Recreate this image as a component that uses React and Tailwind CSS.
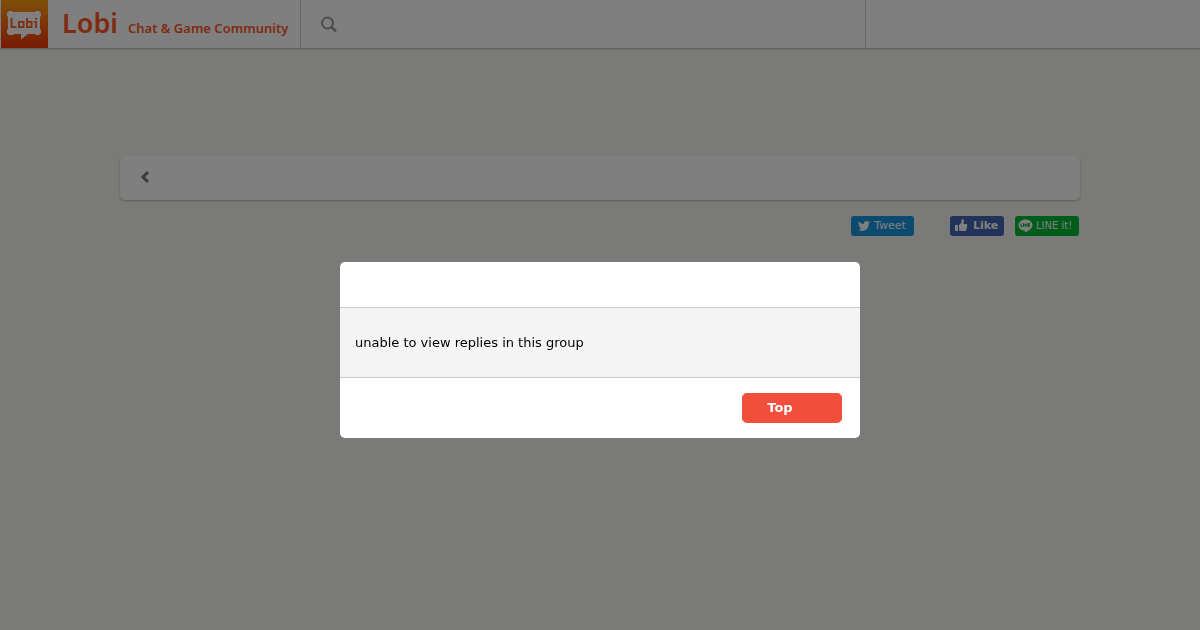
const LobiMark = () => (
  <svg viewBox="0 0 48 48" className="h-12 w-12 shrink-0" aria-hidden="true">
    <defs>
      <linearGradient id="lobi-bg" x1="0" y1="0" x2="0" y2="1">
        <stop offset="0" stopColor="#f9a00f" />
        <stop offset="0.5" stopColor="#fb6a14" />
        <stop offset="1" stopColor="#f2340c" />
      </linearGradient>
    </defs>
    <path d="M1 0h47v48H1z" fill="url(#lobi-bg)" />
    <path
      d="M9 11h3l1 1h22l1-1h3l2 2v3l-1 1v12l1 1v3l-2 2h-3l-1-1h-7l-7 5.500V34h-7l-1 1H9l-2-2v-3l1-1V17l-1-1v-3z"
      fill="#fff"
    />
    <g fill="none" stroke="#fb5a1c" strokeWidth="1.8">
      <path d="M11.500 18v9.200h5" />
      <path d="M19 21.800h4.600v5.400H19z" />
      <path d="M27 18v9.200h4.600v-5.400H27" />
      <path d="M34 21.800h2V28M36 17.800v2" />
    </g>
  </svg>
);

const SearchIcon = () => (
  <svg viewBox="0 0 18 18" className="h-[18px] w-[18px]" fill="none" stroke="#999" strokeWidth="2" aria-hidden="true">
    <circle cx="7.5" cy="8" r="5.5" />
    <path d="M11.500 12l4.500 4.500" strokeWidth="2.5" />
  </svg>
);

const BackIcon = () => (
  <svg viewBox="0 0 12 14" className="h-3.5 w-3" fill="none" stroke="#777" strokeWidth="3" aria-hidden="true">
    <path d="M9 1L4 6L9 11" />
  </svg>
);

const TwitterIcon = () => (
  <svg viewBox="0 0 24 24" className="h-3 w-3" fill="#fff" aria-hidden="true">
    <path d="M23.950 4.570a10 10 0 0 1-2.820.770 4.960 4.960 0 0 0 2.160-2.720c-.950.550-2 .960-3.130 1.180a4.920 4.920 0 0 0-8.380 4.480C7.690 8.090 4.070 6.130 1.640 3.160a4.920 4.920 0 0 0 1.520 6.570 4.900 4.900 0 0 1-2.230-.610v.060a4.920 4.920 0 0 0 3.950 4.830 5 5 0 0 1-2.210.080 4.940 4.940 0 0 0 4.600 3.420A9.870 9.870 0 0 1 0 19.540a13.990 13.990 0 0 0 7.550 2.210c9.050 0 14-7.500 14-13.980 0-.210 0-.420-.020-.630a9.940 9.940 0 0 0 2.460-2.550z" />
  </svg>
);

const ThumbIcon = () => (
  <svg viewBox="0 0 14 14" className="h-3.5 w-3.5" fill="#fff" aria-hidden="true">
    <path d="M1 6h3v6H1z" />
    <path d="M5 6l2.500-2.500V1.200C7.500.500 8 .300 8.500.300c1 0 1.500.800 1.500 1.700L9.500 5H12c1.700 0 1.700 1.700.800 2.100.800.500.600 1.500-.200 1.800.500.600.200 1.400-.500 1.600.300.800-.200 1.500-1.100 1.500H7.500L5 11.500z" />
  </svg>
);

const LineIcon = () => (
  <svg viewBox="0 0 15 14" className="h-3.5 w-[15px]" aria-hidden="true">
    <path
      d="M7.500.500C3.500.500.500 3 .500 6.200c0 2.900 2.500 5 5.800 5.400.700.100.500.700.400 2 2.800-1.300 7.800-4 7.800-7.400C14.500 3 11.500.500 7.500.500z"
      fill="#fff"
    />
    <path
      d="M3 4.500v3h1.500M5.500 4.300v3.400M7 7.700V4.800l2 2.700V4.300M12 4.600h-1.500v3H12M10.500 6H12"
      fill="none"
      stroke="#00a52d"
      strokeWidth="1"
    />
  </svg>
);

const Header = () => (
  <header className="flex h-12 bg-white shadow-[0_1px_2px_rgba(0,0,0,0.3)]">
    <a href="#top" className="flex w-[301px] shrink-0 border-r border-[#ccc] text-[#ff5526]">
      <LobiMark />
      <span className="flex items-baseline gap-2.5 pl-3.5 font-['Noto_Sans',sans-serif] whitespace-nowrap">
        <span className="text-[27px] leading-[46px] font-semibold">Lobi</span>
        <span className="text-[13px] font-semibold">Chat &amp; Game Community</span>
      </span>
    </a>
    <form className="flex w-[565px] items-center border-r border-[#ccc] pl-[19px]">
      <button type="submit" aria-label="Search">
        <SearchIcon />
      </button>
      <input type="search" aria-label="Search" className="min-w-0 flex-1 outline-none" />
    </form>
  </header>
);

const ShareButtons = () => (
  <div className="mt-4 flex justify-end pr-px text-[11px] leading-5 text-white">
    <a href="#tweet" className="mr-9 flex h-5 w-[63px] items-center gap-1 rounded-[3px] bg-[#1b95e0] pl-[7px]">
      <TwitterIcon />
      Tweet
    </a>
    <button type="button" className="mr-[11px] flex h-5 w-[54px] items-center gap-[5px] rounded-[3px] bg-[#4267b2] pl-1 font-bold">
      <ThumbIcon />
      Like
    </button>
    <a href="#line" className="flex h-5 w-16 items-center gap-[3px] rounded-[3px] bg-[#00b833] pl-[3px] text-[10px] whitespace-nowrap">
      <LineIcon />
      LINE it!
    </a>
  </div>
);

const Dialog = () => (
  <div className="fixed inset-0 bg-black/50 pt-[262px]">
    <div role="dialog" aria-modal="true" aria-describedby="message" className="mx-auto max-w-[520px] overflow-hidden rounded-[5px] bg-white">
      <div className="h-[45px]" />
      <p id="message" className="border-y border-[#ccc] bg-[#f4f4f4] px-[15px] py-6 text-[13px] leading-[21px] text-black">
        unable to view replies in this group
      </p>
      <div className="flex justify-end py-[15px] pr-[18px]">
        <button type="button" className="h-[30px] w-[100px] rounded-[5px] bg-[#f24e3c] pr-6 text-[13px] font-bold text-white">
          Top
        </button>
      </div>
    </div>
  </div>
);

export default function App() {
  return (
    <div className="min-h-screen bg-[#f4f4f0] font-['DejaVu_Sans',sans-serif]">
      <Header />
      <main className="mx-auto max-w-[960px] pt-[108px]">
        <div className="flex h-11 items-center rounded-[5px] bg-white pl-[19px] shadow-[0_1px_2px_rgba(0,0,0,0.25)]">
          <button type="button" aria-label="Back">
            <BackIcon />
          </button>
        </div>
        <ShareButtons />
      </main>
      <Dialog />
    </div>
  );
}
